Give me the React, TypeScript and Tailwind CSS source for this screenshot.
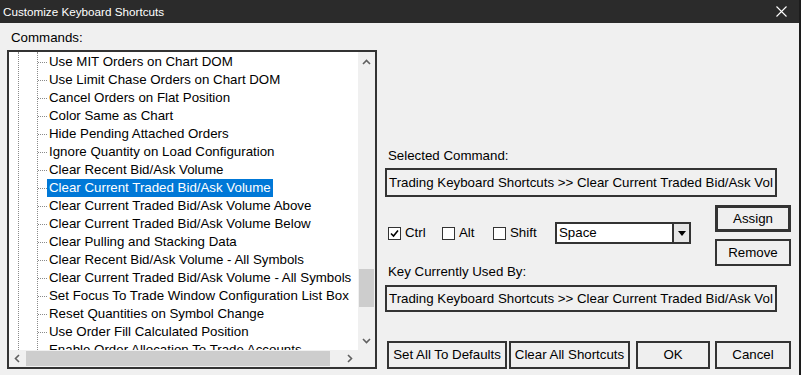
import React from "react";

const commands = [
  "Use MIT Orders on Chart DOM",
  "Use Limit Chase Orders on Chart DOM",
  "Cancel Orders on Flat Position",
  "Color Same as Chart",
  "Hide Pending Attached Orders",
  "Ignore Quantity on Load Configuration",
  "Clear Recent Bid/Ask Volume",
  "Clear Current Traded Bid/Ask Volume",
  "Clear Current Traded Bid/Ask Volume Above",
  "Clear Current Traded Bid/Ask Volume Below",
  "Clear Pulling and Stacking Data",
  "Clear Recent Bid/Ask Volume - All Symbols",
  "Clear Current Traded Bid/Ask Volume - All Symbols",
  "Set Focus To Trade Window Configuration List Box",
  "Reset Quantities on Symbol Change",
  "Use Order Fill Calculated Position",
  "Enable Order Allocation To Trade Accounts",
];

const selectedIndex = 7;
const selectedText = "Trading Keyboard Shortcuts >> Clear Current Traded Bid/Ask Vol";

function Chevron({ dir }: { dir: "up" | "down" | "left" | "right" }) {
  const d = {
    up: "M1 6 L4.5 2.5 L8 6",
    down: "M1 3 L4.5 6.5 L8 3",
    left: "M6 1 L2.5 4.5 L6 8",
    right: "M3 1 L6.5 4.5 L3 8",
  }[dir];
  return (
    <svg width="9" height="9" viewBox="0 0 9 9">
      <path d={d} fill="none" stroke="#606060" strokeWidth="1.6" />
    </svg>
  );
}

function Checkbox({ checked, label, width }: { checked: boolean; label: string; width: string }) {
  return (
    <div className={`flex items-center gap-[4px] ${width}`}>
      <div className="flex h-[13px] w-[13px] items-center justify-center border border-[#333] bg-white">
        {checked && (
          <svg width="9" height="9" viewBox="0 0 9 9">
            <path d="M1 4.5 L3.5 7 L8 1.5" fill="none" stroke="#000" strokeWidth="1.6" />
          </svg>
        )}
      </div>
      <span>{label}</span>
    </div>
  );
}

function Button({ children, className }: { children: React.ReactNode; className: string }) {
  return (
    <div className={`flex items-center justify-center border-2 border-[#333] bg-[#efefef] text-black ${className}`}>
      {children}
    </div>
  );
}

export default function App() {
  return (
    <div className="flex h-[375px] w-[801px] bg-[#1c1c1c] font-['Liberation_Sans',Arial,sans-serif] text-[13.3px] text-black">
      <div className="flex h-full w-[799px] flex-col">
        <div className="flex h-[23px] items-center justify-between bg-[#2b2b2b] pl-[3px] pr-[12px] text-[11.7px] text-white">
          <span>Customize Keyboard Shortcuts</span>
          <svg width="11" height="11" viewBox="0 0 11 11">
            <path d="M0.5 0.5 L10.5 10.5 M10.5 0.5 L0.5 10.5" stroke="#fff" strokeWidth="1.1" />
          </svg>
        </div>

        <div className="flex flex-1 bg-[#f0f0f0]">
          {/* left: commands list */}
          <div className="ml-[7px] flex w-[370px] flex-col">
            <div className="ml-[4px] pt-[5px] leading-[20px]">Commands:</div>
            <div className="mt-[2px] flex h-[319px] flex-col border-2 border-[#333] bg-white">
              <div className="flex h-[298px]">
                <div className="flex w-[349px] overflow-hidden">
                  <div className="w-[9px] shrink-0" />
                  <div className="w-0 shrink-0 border-l border-dotted border-[#8a8a8a]" />
                  <div className="w-[18px] shrink-0" />
                  <div className="flex flex-1 flex-col border-l border-dotted border-[#8a8a8a] pt-[1px]">
                    {commands.map((c, i) => (
                      <div key={c} className="flex h-[18px] shrink-0 items-center">
                        <div className="w-[9px] shrink-0 border-t border-dotted border-[#8a8a8a]" />
                        <span
                          className={`whitespace-nowrap px-[2px] leading-[18px] ${
                            i === selectedIndex ? "bg-[#0078d7] text-white" : ""
                          }`}
                        >
                          {c}
                        </span>
                      </div>
                    ))}
                  </div>
                </div>
                <div className="flex w-[17px] flex-col bg-[#f0f0f0]">
                  <div className="flex h-[20px] items-center justify-center">
                    <Chevron dir="up" />
                  </div>
                  <div className="h-[197px]" />
                  <div className="mx-[1px] h-[38px] bg-[#cdcdcd]" />
                  <div className="flex-1" />
                  <div className="flex h-[20px] items-center justify-center">
                    <Chevron dir="down" />
                  </div>
                </div>
              </div>
              <div className="flex h-[17px] bg-[#f0f0f0]">
                <div className="flex w-[17px] items-center justify-center">
                  <Chevron dir="left" />
                </div>
                <div className="my-[1px] w-[304px] bg-[#cdcdcd]" />
                <div className="flex-1" />
                <div className="flex w-[17px] items-center justify-center">
                  <Chevron dir="right" />
                </div>
                <div className="w-[17px]" />
              </div>
            </div>
          </div>

          {/* right: details */}
          <div className="ml-[8px] flex w-[406px] flex-col">
            <div className="ml-[3px] mt-[124px] leading-[18px]">Selected Command:</div>
            <div className="mt-[3px] flex h-[29px] w-[392px] items-center overflow-hidden whitespace-nowrap border-2 border-[#333] pl-[2px]">
              {selectedText}
            </div>

            <div className="mt-[8px] flex items-start">
              <div className="flex flex-1 flex-col">
                <div className="mt-[17px] flex h-[22px] items-center pl-[3px]">
                  <Checkbox checked label="Ctrl" width="w-[54px]" />
                  <Checkbox checked={false} label="Alt" width="w-[51px]" />
                  <Checkbox checked={false} label="Shift" width="w-[62px]" />
                  <div className="flex h-[22px] w-[136px] border-2 border-[#333] bg-white">
                    <div className="flex flex-1 items-center pl-[2px]">Space</div>
                    <div className="flex w-[17px] items-center justify-center border-l-2 border-[#333] bg-[#e6e6e6]">
                      <svg width="8" height="5" viewBox="0 0 8 5">
                        <path d="M0 0 L8 0 L4 5 Z" fill="#000" />
                      </svg>
                    </div>
                  </div>
                </div>
                <div className="ml-[3px] mt-[20px] leading-[16px]">Key Currently Used By:</div>
              </div>
              <div className="flex w-[76px] flex-col gap-[7px]">
                <Button className="h-[27px] border-[3px] border-[#3c3c3c]">Assign</Button>
                <Button className="h-[27px]">Remove</Button>
              </div>
            </div>

            <div className="mt-[5px] flex h-[27px] w-[392px] items-center overflow-hidden whitespace-nowrap border-2 border-[#333] pl-[2px]">
              {selectedText}
            </div>

            <div className="mt-[29px] flex h-[28px]">
              <Button className="ml-[2px] w-[120px]">Set All To Defaults</Button>
              <Button className="ml-[2px] w-[121px]">Clear All Shortcuts</Button>
              <Button className="ml-[6px] w-[74px]">OK</Button>
              <Button className="ml-[5px] w-[76px]">Cancel</Button>
            </div>
          </div>
        </div>
      </div>
    </div>
  );
}
